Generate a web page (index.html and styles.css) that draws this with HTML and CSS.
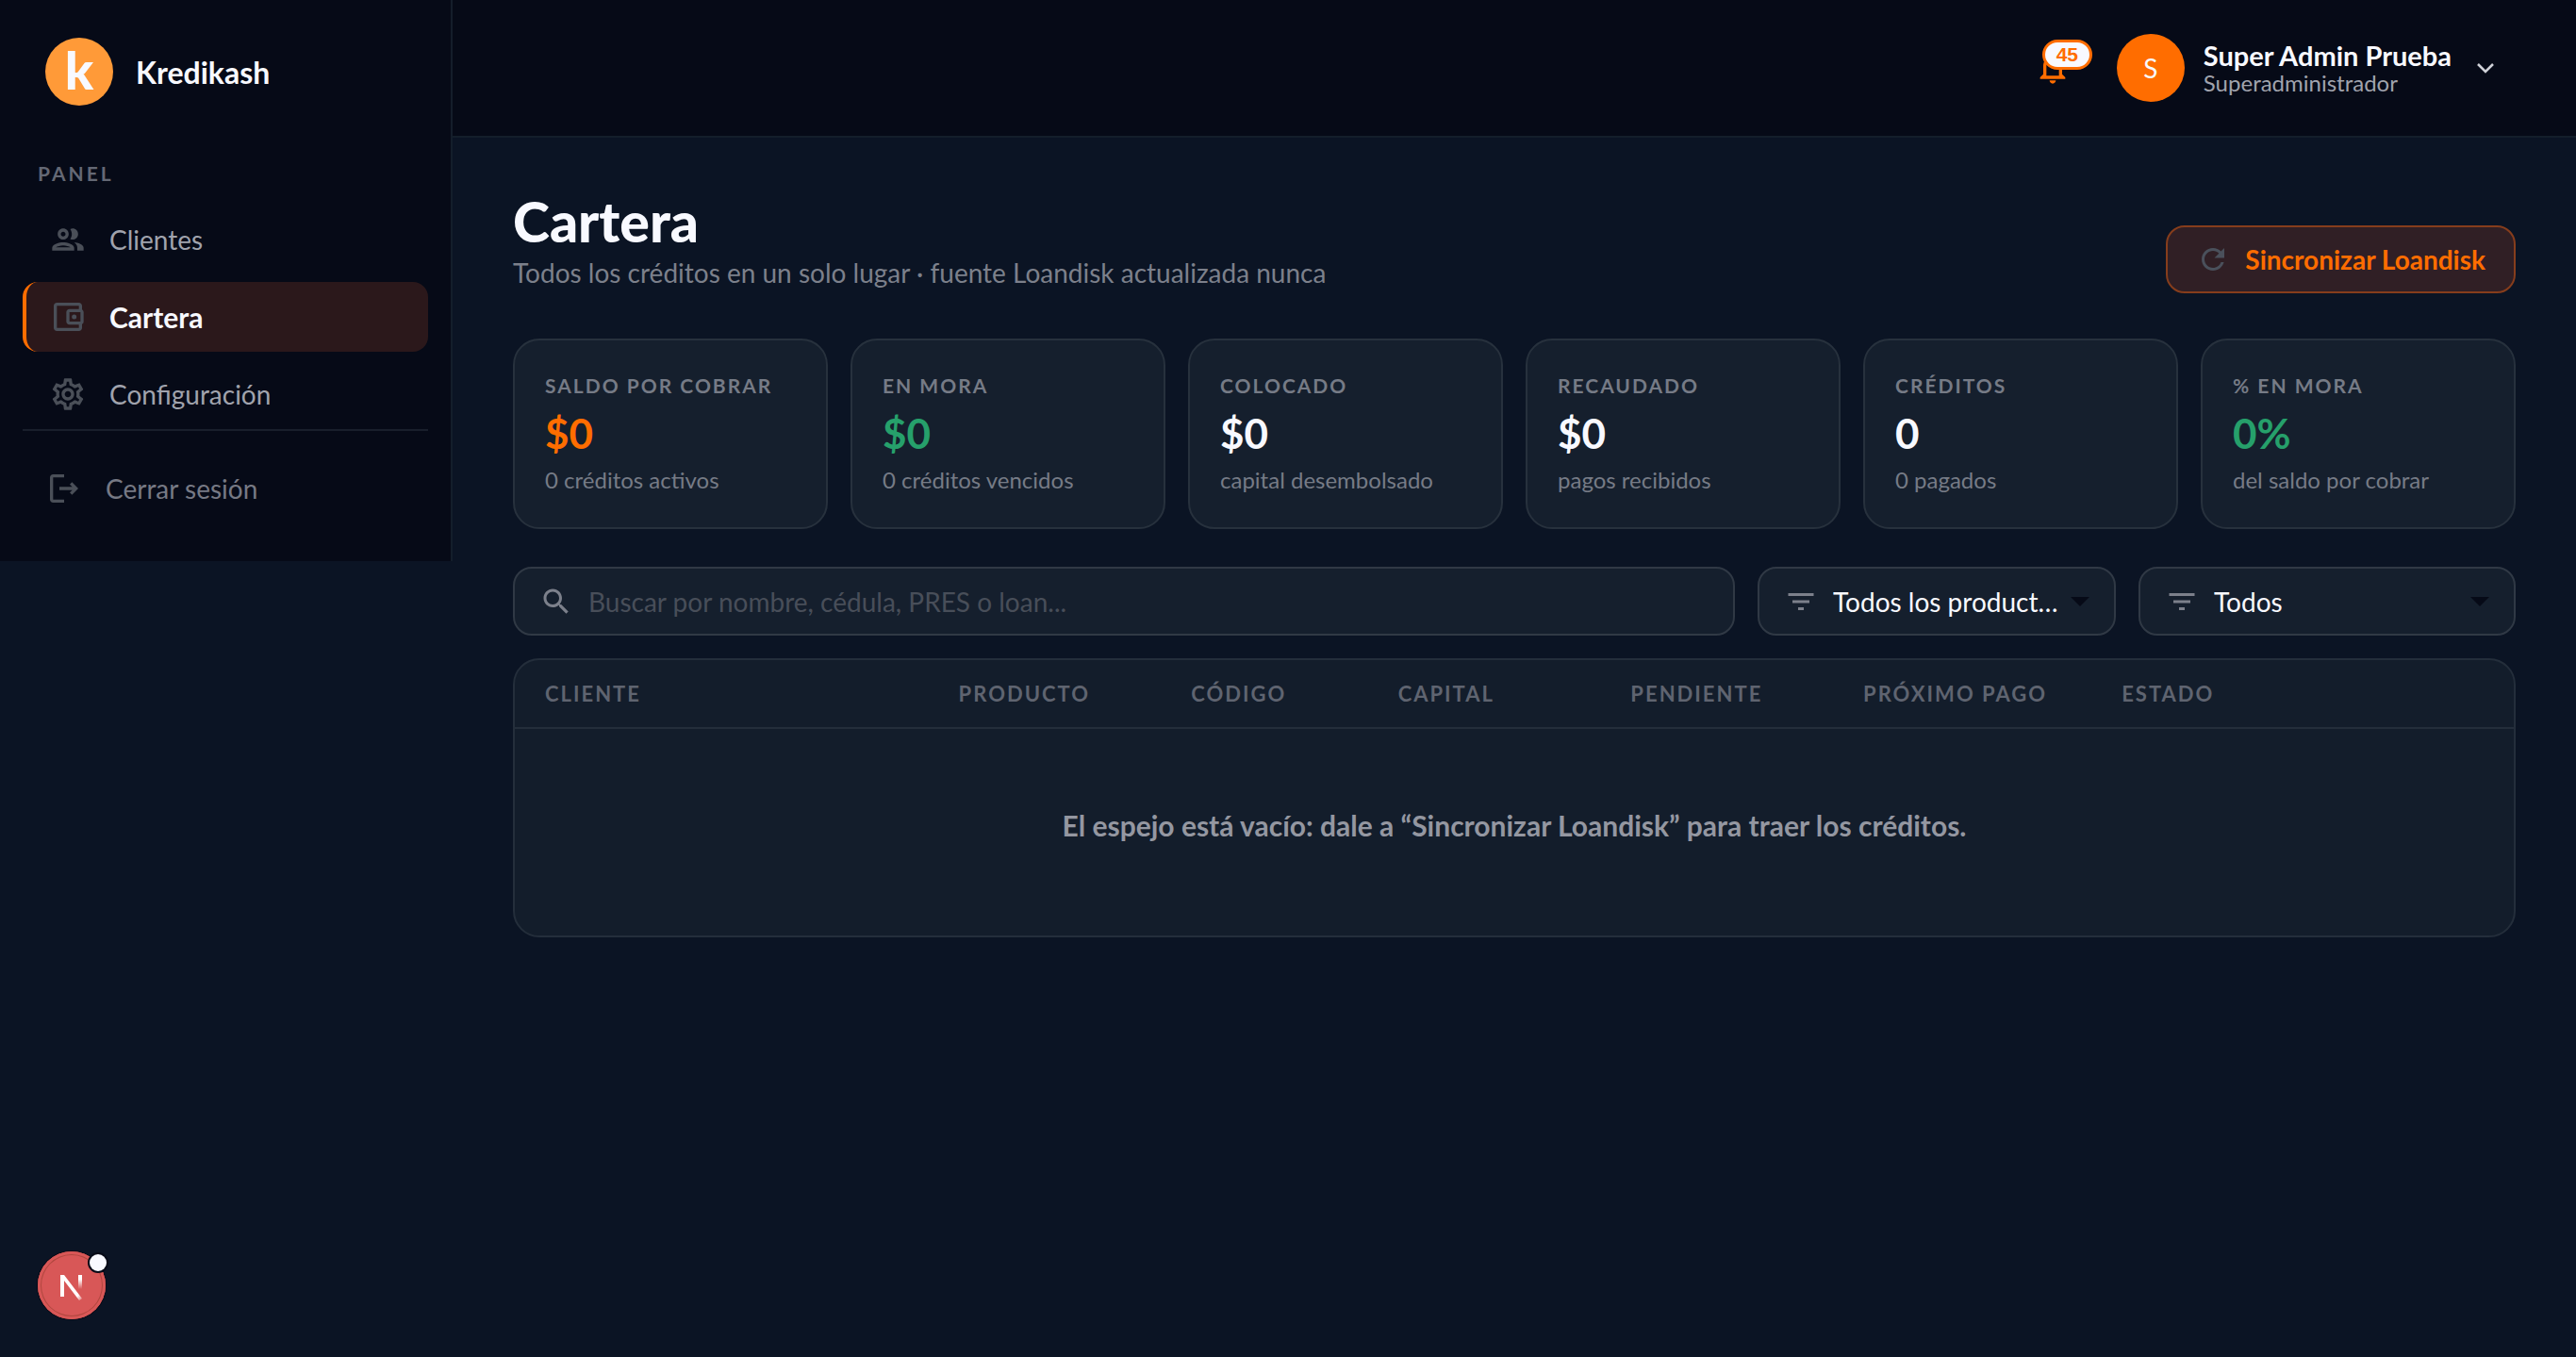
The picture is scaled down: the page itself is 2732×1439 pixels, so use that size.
FILE: index.html
```html
<!DOCTYPE html>
<html lang="es">
<head>
    <meta charset="UTF-8">
    <meta name="viewport" content="width=device-width, initial-scale=1.0">
    <title>Kredikash - Cartera</title>
    <link rel="stylesheet" href="styles.css">
</head>
<body>
    <aside class="sidebar">
        <a class="brand" href="#">
            <span class="brand-logo">k</span>
            <span class="brand-name">Kredikash</span>
        </a>
        <p class="nav-title">PANEL</p>
        <nav class="nav">
            <a class="nav-link" href="#">
                <svg class="icon-nav" viewBox="0 0 24 24"><path d="M9 13.750c-2.340 0-7 1.170-7 3.500V19h14v-1.750c0-2.330-4.660-3.500-7-3.500zM4.340 17c.84-.58 2.870-1.250 4.660-1.250s3.820.67 4.660 1.250H4.340zM9 12c1.930 0 3.500-1.570 3.500-3.500S10.930 5 9 5 5.500 6.570 5.500 8.500 7.070 12 9 12zm0-5c.83 0 1.500.67 1.500 1.500S9.830 10 9 10s-1.500-.67-1.500-1.500S8.170 7 9 7zm7.040 6.810c1.160.84 1.960 1.960 1.960 3.440V19h4v-1.750c0-2.020-3.500-3.170-5.960-3.440zM15 12c1.930 0 3.500-1.570 3.500-3.500S16.930 5 15 5c-.54 0-1.040.13-1.500.35.63.89 1 1.980 1 3.150s-.37 2.260-1 3.150c.46.22.96.35 1.500.35z"/></svg>
                Clientes
            </a>
            <a class="nav-link active" href="#">
                <svg class="icon-nav" viewBox="0 0 24 24"><path d="M21 7.280V5c0-1.100-.9-2-2-2H5c-1.110 0-2 .9-2 2v14c0 1.100.89 2 2 2h14c1.100 0 2-.9 2-2v-2.280c.59-.35 1-.98 1-1.720V9c0-.74-.41-1.370-1-1.720zM20 9v6h-7V9h7zM5 19V5h14v2h-6c-1.100 0-2 .9-2 2v6c0 1.100.9 2 2 2h6v2H5z"/><circle cx="16" cy="12" r="1.500"/></svg>
                Cartera
            </a>
            <a class="nav-link" href="#">
                <svg class="icon-nav" viewBox="0 0 24 24"><path d="M19.430 12.980c.04-.32.07-.64.07-.98 0-.34-.03-.66-.07-.98l2.110-1.650c.19-.15.24-.42.12-.64l-2-3.460c-.09-.16-.26-.25-.44-.25-.06 0-.12.010-.17.030l-2.490 1c-.52-.4-1.080-.73-1.690-.98l-.38-2.650C14.460 2.180 14.250 2 14 2h-4c-.25 0-.46.18-.49.42l-.38 2.650c-.61.25-1.170.59-1.690.98l-2.490-1c-.06-.02-.12-.03-.18-.03-.17 0-.34.09-.43.25l-2 3.460c-.13.22-.07.49.12.64l2.110 1.650c-.04.32-.07.65-.07.98 0 .33.030.66.070.98l-2.110 1.650c-.19.15-.24.42-.12.64l2 3.460c.09.16.26.25.44.25.06 0 .12-.01.17-.03l2.490-1c.52.4 1.080.73 1.690.98l.38 2.650c.03.24.24.42.49.42h4c.25 0 .46-.18.49-.42l.38-2.650c.61-.25 1.170-.59 1.690-.98l2.490 1c.06.02.12.03.18.03.17 0 .34-.09.43-.25l2-3.460c.12-.22.07-.49-.12-.64l-2.110-1.650zm-1.980-1.710c.04.31.05.52.05.73 0 .21-.02.43-.05.73l-.14 1.130.89.7 1.080.84-.7 1.210-1.270-.51-1.040-.42-.9.68c-.43.32-.84.56-1.250.73l-1.060.43-.16 1.130-.2 1.350h-1.400l-.19-1.350-.16-1.130-1.060-.43c-.43-.18-.83-.41-1.230-.71l-.91-.7-1.060.43-1.270.51-.7-1.210 1.080-.84.89-.7-.14-1.130c-.03-.31-.05-.54-.05-.74s.02-.43.05-.73l.14-1.130-.89-.7-1.080-.84.7-1.210 1.270.51 1.040.42.9-.68c.43-.32.84-.56 1.250-.73l1.060-.43.16-1.130.2-1.350h1.390l.19 1.350.16 1.130 1.060.43c.43.18.83.41 1.230.71l.91.7 1.060-.43 1.270-.51.7 1.210-1.070.85-.89.7.14 1.130zM12 8c-2.210 0-4 1.790-4 4s1.790 4 4 4 4-1.790 4-4-1.790-4-4-4zm0 6c-1.100 0-2-.9-2-2s.9-2 2-2 2 .9 2 2-.9 2-2 2z"/></svg>
                Configuración
            </a>
        </nav>
        <a class="logout" href="#">
            <svg class="icon-nav" viewBox="0 0 24 24"><path d="M5 5h7V3H5c-1.100 0-2 .9-2 2v14c0 1.100.9 2 2 2h7v-2H5V5zm16 7l-4-4-1.400 1.400L17.200 11H9v2h8.200l-1.600 1.600L17 16l4-4z"/></svg>
            Cerrar sesión
        </a>
    </aside>

    <div class="page">
        <header class="topbar">
            <button class="bell" type="button" aria-label="Notificaciones">
                <svg class="icon-bell" viewBox="0 0 24 24"><path d="M12 22c1.100 0 2-.9 2-2h-4c0 1.100.9 2 2 2zm6-6v-5c0-3.070-1.630-5.640-4.500-6.320V4c0-.83-.67-1.500-1.500-1.500s-1.500.67-1.500 1.500v.68C7.640 5.360 6 7.920 6 11v5l-2 2v1h16v-1l-2-2zm-2 1H8v-6c0-2.480 1.510-4.500 4-4.500s4 2.020 4 4.500v6z"/></svg>
                <span class="badge">45</span>
            </button>
            <button class="user" type="button">
                <span class="avatar">S</span>
                <span class="user-text">
                    <span class="user-name">Super Admin Prueba</span>
                    <span class="user-role">Superadministrador</span>
                </span>
                <svg class="icon-chevron" viewBox="0 0 24 24"><path d="M4 8l8 8 8-8"/></svg>
            </button>
        </header>

        <main class="content">
            <div class="heading">
                <div class="heading-text">
                    <h1>Cartera</h1>
                    <p class="subtitle">Todos los créditos en un solo lugar · fuente Loandisk actualizada nunca</p>
                </div>
                <button class="sync" type="button">
                    <svg class="icon-sync" viewBox="0 0 24 24"><path d="M17.650 6.350C16.200 4.900 14.210 4 12 4c-4.420 0-7.990 3.580-7.990 8s3.570 8 7.990 8c3.730 0 6.840-2.550 7.730-6h-2.080c-.82 2.330-3.040 4-5.650 4-3.310 0-6-2.690-6-6s2.690-6 6-6c1.660 0 3.140.69 4.220 1.780L13 11h7V4l-2.350 2.350z"/></svg>
                    Sincronizar Loandisk
                </button>
            </div>

            <section class="cards">
                <div class="card">
                    <h2>SALDO POR COBRAR</h2>
                    <strong class="orange">$0</strong>
                    <p>0 créditos activos</p>
                </div>
                <div class="card">
                    <h2>EN MORA</h2>
                    <strong class="green">$0</strong>
                    <p>0 créditos vencidos</p>
                </div>
                <div class="card">
                    <h2>COLOCADO</h2>
                    <strong>$0</strong>
                    <p>capital desembolsado</p>
                </div>
                <div class="card">
                    <h2>RECAUDADO</h2>
                    <strong>$0</strong>
                    <p>pagos recibidos</p>
                </div>
                <div class="card">
                    <h2>CRÉDITOS</h2>
                    <strong>0</strong>
                    <p>0 pagados</p>
                </div>
                <div class="card">
                    <h2>% EN MORA</h2>
                    <strong class="green">0%</strong>
                    <p>del saldo por cobrar</p>
                </div>
            </section>

            <form class="filters">
                <label class="field search">
                    <svg class="icon-field" viewBox="0 0 24 24"><path d="M15.500 14h-.79l-.28-.27C15.410 12.590 16 11.110 16 9.500 16 5.910 13.090 3 9.500 3S3 5.910 3 9.500 5.910 16 9.500 16c1.610 0 3.090-.59 4.230-1.570l.27.28v.79l5 4.990L20.490 19l-4.990-5zm-6 0C7.010 14 5 11.990 5 9.500S7.010 5 9.500 5 14 7.010 14 9.500 11.990 14 9.500 14z"/></svg>
                    <input type="text" aria-label="Buscar" placeholder="Buscar por nombre, cédula, PRES o loan...">
                </label>
                <label class="field product">
                    <svg class="icon-field" viewBox="0 0 24 24"><path d="M10 18h4v-2h-4v2zM3 6v2h18V6H3zm3 7h12v-2H6v2z"/></svg>
                    <select aria-label="Producto">
                        <option>Todos los productos</option>
                    </select>
                    <svg class="icon-arrow" viewBox="0 0 20 10"><path d="M0 0h20L10 10z"/></svg>
                </label>
                <label class="field">
                    <svg class="icon-field" viewBox="0 0 24 24"><path d="M10 18h4v-2h-4v2zM3 6v2h18V6H3zm3 7h12v-2H6v2z"/></svg>
                    <select aria-label="Estado">
                        <option>Todos</option>
                    </select>
                    <svg class="icon-arrow" viewBox="0 0 20 10"><path d="M0 0h20L10 10z"/></svg>
                </label>
            </form>

            <table class="loans">
                <thead>
                    <tr>
                        <th>CLIENTE</th>
                        <th>PRODUCTO</th>
                        <th>CÓDIGO</th>
                        <th>CAPITAL</th>
                        <th>PENDIENTE</th>
                        <th>PRÓXIMO PAGO</th>
                        <th>ESTADO</th>
                        <th></th>
                    </tr>
                </thead>
                <tbody>
                    <tr>
                        <td colspan="8">El espejo está vacío: dale a “Sincronizar Loandisk” para traer los créditos.</td>
                    </tr>
                </tbody>
            </table>
        </main>
    </div>

    <button class="dev" type="button" aria-label="Herramientas">
        <svg class="icon-dev" viewBox="0 0 72 72">
            <defs>
                <linearGradient id="fade" x1="0" y1="0" x2="0" y2="1">
                    <stop offset="0.3" stop-color="#fff"/>
                    <stop offset="1" stop-color="#fff" stop-opacity="0"/>
                </linearGradient>
                <linearGradient id="fadeEnd" x1="0" y1="0" x2="1" y2="1">
                    <stop offset="0.8" stop-color="#fff"/>
                    <stop offset="1" stop-color="#fff" stop-opacity="0.2"/>
                </linearGradient>
            </defs>
            <path d="M24 48V25h4L47 50l-3 2L28 31v17z" fill="url(#fadeEnd)"/>
            <rect x="43" y="25" width="4" height="15" fill="url(#fade)"/>
        </svg>
        <span class="dev-dot"></span>
    </button>
</body>
</html>
```
FILE: styles.css
```css
* {
    box-sizing: border-box;
}
body {
    margin: 0;
    min-height: 100vh;
    display: flex;
    align-items: flex-start;
    background-color: #0b1424;
    color: #f8f9ff;
    font-family: Lato, "Liberation Sans", sans-serif;
    font-size: 28px;
}
h1, h2, p {
    margin: 0;
}
a {
    color: inherit;
    text-decoration: none;
}
button, input, select {
    font: inherit;
    color: inherit;
    background: none;
    border: none;
    padding: 0;
    outline: none;
}
svg {
    display: block;
    flex: none;
    fill: currentColor;
}

/* Menú lateral */
.sidebar {
    width: 480px;
    flex: none;
    padding: 40px 24px;
    background-color: #060a17;
    border-right: 2px solid #141e2b;
}
.brand {
    display: flex;
    align-items: center;
    gap: 24px;
    padding: 0 24px;
}
.brand-logo {
    width: 72px;
    height: 72px;
    padding-bottom: 4px;
    display: flex;
    align-items: center;
    justify-content: center;
    border-radius: 50%;
    background-color: #ff9a38;
    font-size: 56px;
    font-weight: 900;
    line-height: 64px;
}
.brand-name {
    font-size: 32px;
    font-weight: 700;
}
.nav-title {
    margin: 56px 0 17px;
    padding-left: 16px;
    color: #646874;
    font-size: 21px;
    font-weight: 700;
    line-height: 32px;
    letter-spacing: 3px;
}
.nav {
    display: flex;
    flex-direction: column;
    gap: 8px;
    border-bottom: 2px solid #191f2c;
}
.nav-link {
    height: 74px;
    display: flex;
    align-items: center;
    gap: 24px;
    padding: 0 24px;
    border-left: 4px solid transparent;
    border-radius: 16px;
    color: #a0a3ad;
}
.nav-link.active {
    background-color: #2b181b;
    border-left-color: #ff6d00;
    color: #f8f9ff;
    font-size: 30px;
    font-weight: 700;
}
.icon-nav {
    width: 40px;
    height: 40px;
    color: #4a4f58;
}
.logout {
    margin-top: 24px;
    height: 74px;
    display: flex;
    align-items: center;
    gap: 24px;
    padding: 0 24px;
    color: #767984;
}

/* Barra superior */
.page {
    flex: 1;
    min-width: 0;
}
.topbar {
    height: 146px;
    display: flex;
    align-items: center;
    justify-content: flex-end;
    gap: 48px;
    padding: 0 84px;
    background-color: #060a17;
    border-bottom: 2px solid #141e2b;
}
.bell {
    position: relative;
    color: #ff6d00;
}
.icon-bell {
    width: 40px;
    height: 40px;
}
.badge {
    position: absolute;
    top: -10px;
    left: 9px;
    width: 53px;
    height: 32px;
    border: 3px solid #ff6d00;
    border-radius: 16px;
    background-color: #f8f9ff;
    font-family: "Liberation Sans", sans-serif;
    font-size: 21px;
    font-weight: 700;
    line-height: 26px;
    text-align: center;
}
.user {
    display: flex;
    align-items: center;
    gap: 20px;
    text-align: left;
}
.avatar {
    width: 72px;
    height: 72px;
    border-radius: 50%;
    background-color: #ff6d00;
    line-height: 72px;
    text-align: center;
}
.user-text {
    display: flex;
    flex-direction: column;
}
.user-name {
    font-size: 29px;
    font-weight: 700;
    line-height: 32px;
}
.user-role {
    color: #a0a3ad;
    font-size: 24px;
    line-height: 26px;
}
.icon-chevron {
    width: 24px;
    height: 24px;
    margin-left: 4px;
    fill: none;
    stroke: #cfd1d8;
    stroke-width: 2.500;
}

/* Contenido */
.content {
    padding: 59px 64px;
}
.heading {
    display: flex;
    align-items: flex-end;
    justify-content: space-between;
}
.heading-text {
    padding-bottom: 2px;
}
h1 {
    font-size: 59px;
    font-weight: 900;
    line-height: 60px;
}
.subtitle {
    margin-top: 4px;
    color: #7c808b;
    line-height: 40px;
}
.sync {
    height: 72px;
    display: flex;
    align-items: center;
    gap: 16px;
    padding: 0 30px;
    border: 2px solid #863d1c;
    border-radius: 20px;
    background-color: #301f25;
    color: #ff6d00;
    font-weight: 700;
}
.icon-sync {
    width: 36px;
    height: 36px;
    color: #4a505b;
}
.cards {
    margin-top: 48px;
    display: grid;
    grid-template-columns: repeat(6, 1fr);
    gap: 24px;
}
.card {
    padding: 32px 32px 34px;
    border: 2px solid #27313d;
    border-radius: 28px;
    background-color: #151f2d;
}
.card h2 {
    color: #767b86;
    font-size: 21px;
    font-weight: 700;
    line-height: 32px;
    letter-spacing: 2px;
}
.card strong {
    display: block;
    font-size: 44px;
    font-weight: 700;
    line-height: 68px;
}
.card .orange {
    color: #ff6d00;
}
.card .green {
    color: #26a06b;
}
.card p {
    color: #767b86;
    font-size: 24px;
    line-height: 32px;
}

/* Filtros */
.filters {
    margin-top: 40px;
    display: flex;
    gap: 24px;
}
.field {
    width: 400px;
    height: 73px;
    display: flex;
    align-items: center;
    gap: 16px;
    padding: 0 26px;
    border: 2px solid #303945;
    border-radius: 20px;
    background-color: #151f2d;
}
.field.search {
    flex: 1;
}
.field.product {
    width: 380px;
}
.field input,
.field select {
    flex: 1;
    min-width: 0;
    appearance: none;
    overflow: hidden;
    white-space: nowrap;
    text-overflow: ellipsis;
}
.field select {
    margin-right: -6px;
}
.field input::placeholder {
    color: #484e59;
    opacity: 1;
}
.icon-field {
    width: 36px;
    height: 36px;
    color: #7c808b;
}
.icon-arrow {
    width: 20px;
    height: 10px;
    color: #060a17;
}

/* Tabla */
.loans {
    margin-top: 24px;
    width: 100%;
    display: block;
    border: 2px solid #242e3b;
    border-radius: 28px;
    background-color: #131d2b;
}
.loans thead,
.loans tbody,
.loans tbody tr,
.loans td {
    display: block;
}
.loans thead tr {
    display: grid;
    grid-template-columns: 16fr 9fr 8fr 9fr 9fr 10fr 10fr 4fr;
    padding: 0 32px;
    border-bottom: 2px solid #242e3b;
}
.loans th {
    padding: 0;
    color: #5f6470;
    font-size: 22px;
    font-weight: 700;
    line-height: 71px;
    letter-spacing: 2px;
    text-align: left;
}
.loans td {
    padding: 80px 32px 95px;
    color: #9497a1;
    font-size: 30px;
    font-weight: 700;
    line-height: 44px;
    text-align: center;
}

/* Botón flotante */
.dev {
    position: fixed;
    left: 40px;
    bottom: 40px;
    width: 72px;
    height: 72px;
    border-radius: 50%;
    background-color: #d85757;
    box-shadow: 0 0 0 1px #060a17, inset 0 0 0 3px #d85757, inset 0 0 0 4px #b0473f;
}
.dev-dot {
    position: absolute;
    top: 3px;
    right: -1px;
    width: 18px;
    height: 18px;
    border-radius: 50%;
    background-color: #f8f9ff;
    box-shadow: 0 0 0 2px #060a17;
}
```
